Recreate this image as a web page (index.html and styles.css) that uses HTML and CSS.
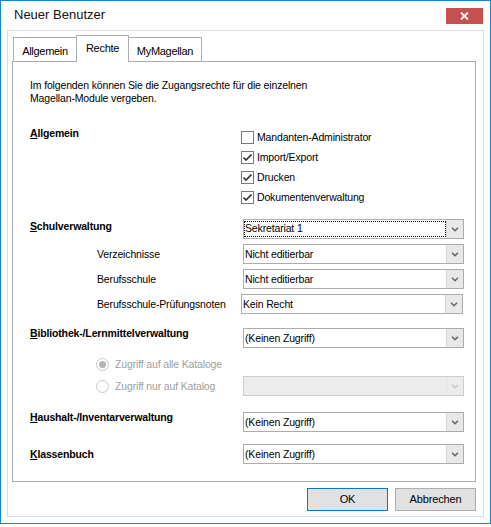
FILE: index.html
```html
<!DOCTYPE html>
<html lang="de">
<head>
  <meta charset="UTF-8" />
  <meta name="viewport" content="width=device-width, initial-scale=1.0"/>
  <title>Neuer Benutzer</title>
  <link rel="stylesheet" href="styles.css">
</head>
<body>

  <div class="window">
    <div class="title-bar">
      <span class="title">Neuer Benutzer</span>
      <div class="close-btn">
        <svg width="9" height="8" viewBox="0 0 9 8"><path d="M1 0.5 L8 7.5 M8 0.5 L1 7.5" stroke="#fff" stroke-width="1.8"/></svg>
      </div>
    </div>

    <div class="client">
      <div class="tabs">
        <div class="tab tab-allgemein">Allgemein</div>
        <div class="tab tab-rechte active">Rechte</div>
        <div class="tab tab-magellan">MyMagellan</div>
      </div>

      <div class="tab-panel">
        <p class="intro">Im folgenden können Sie die Zugangsrechte für die einzelnen<br>Magellan-Module vergeben.</p>

        <!-- Allgemein -->
        <div class="section section-allgemein">
          <div class="section-label"><u>A</u>llgemein</div>
          <div class="check-list">
            <div class="check-row"><span class="checkbox"></span>Mandanten-Administrator</div>
            <div class="check-row"><span class="checkbox checked"><svg width="11" height="11" viewBox="0 0 11 11"><path d="M1.5 5.5 L4 8 L9.5 2.5" fill="none" stroke="#333" stroke-width="1.7"/></svg></span>Import/Export</div>
            <div class="check-row"><span class="checkbox checked"><svg width="11" height="11" viewBox="0 0 11 11"><path d="M1.5 5.5 L4 8 L9.5 2.5" fill="none" stroke="#333" stroke-width="1.7"/></svg></span>Drucken</div>
            <div class="check-row"><span class="checkbox checked"><svg width="11" height="11" viewBox="0 0 11 11"><path d="M1.5 5.5 L4 8 L9.5 2.5" fill="none" stroke="#333" stroke-width="1.7"/></svg></span>Dokumentenverwaltung</div>
          </div>
        </div>

        <!-- Schulverwaltung -->
        <div class="row row-schul">
          <div class="row-label bold label-high"><u>S</u>chulverwaltung</div>
          <div class="combo">
            <div class="combo-value focused">Sekretariat 1</div>
            <div class="combo-arrow"><svg width="8" height="5" viewBox="0 0 8 5"><path d="M1 0.8 L4 3.8 L7 0.8" fill="none" stroke="#666" stroke-width="1.5"/></svg></div>
          </div>
        </div>
        <div class="row sub">
          <div class="row-label">Verzeichnisse</div>
          <div class="combo">
            <div class="combo-value">Nicht editierbar</div>
            <div class="combo-arrow"><svg width="8" height="5" viewBox="0 0 8 5"><path d="M1 0.8 L4 3.8 L7 0.8" fill="none" stroke="#666" stroke-width="1.5"/></svg></div>
          </div>
        </div>
        <div class="row sub">
          <div class="row-label">Berufsschule</div>
          <div class="combo">
            <div class="combo-value">Nicht editierbar</div>
            <div class="combo-arrow"><svg width="8" height="5" viewBox="0 0 8 5"><path d="M1 0.8 L4 3.8 L7 0.8" fill="none" stroke="#666" stroke-width="1.5"/></svg></div>
          </div>
        </div>
        <div class="row sub">
          <div class="row-label">Berufsschule-Prüfungsnoten</div>
          <div class="combo combo-wide">
            <div class="combo-value">Kein Recht</div>
            <div class="combo-arrow"><svg width="8" height="5" viewBox="0 0 8 5"><path d="M1 0.8 L4 3.8 L7 0.8" fill="none" stroke="#666" stroke-width="1.5"/></svg></div>
          </div>
        </div>

        <!-- Bibliothek -->
        <div class="row row-biblio">
          <div class="row-label bold label-top"><u>B</u>ibliothek-/Lernmittelverwaltung</div>
          <div class="combo">
            <div class="combo-value">(Keinen Zugriff)</div>
            <div class="combo-arrow"><svg width="8" height="5" viewBox="0 0 8 5"><path d="M1 0.8 L4 3.8 L7 0.8" fill="none" stroke="#666" stroke-width="1.5"/></svg></div>
          </div>
        </div>
        <div class="row radio-row radio-first">
          <div class="radio-label"><span class="radio checked"></span>Zugriff auf alle Kataloge</div>
        </div>
        <div class="row radio-row">
          <div class="radio-label"><span class="radio"></span>Zugriff nur auf Katalog</div>
          <div class="combo disabled">
            <div class="combo-value"></div>
            <div class="combo-arrow"><svg width="8" height="5" viewBox="0 0 8 5"><path d="M1 0.8 L4 3.8 L7 0.8" fill="none" stroke="#c8c8c8" stroke-width="1.5"/></svg></div>
          </div>
        </div>

        <!-- Haushalt -->
        <div class="row row-haushalt">
          <div class="row-label bold label-top"><u>H</u>aushalt-/Inventarverwaltung</div>
          <div class="combo">
            <div class="combo-value">(Keinen Zugriff)</div>
            <div class="combo-arrow"><svg width="8" height="5" viewBox="0 0 8 5"><path d="M1 0.8 L4 3.8 L7 0.8" fill="none" stroke="#666" stroke-width="1.5"/></svg></div>
          </div>
        </div>

        <!-- Klassenbuch -->
        <div class="row row-klassen">
          <div class="row-label bold"><u>K</u>lassenbuch</div>
          <div class="combo">
            <div class="combo-value">(Keinen Zugriff)</div>
            <div class="combo-arrow"><svg width="8" height="5" viewBox="0 0 8 5"><path d="M1 0.8 L4 3.8 L7 0.8" fill="none" stroke="#666" stroke-width="1.5"/></svg></div>
          </div>
        </div>
      </div>

      <div class="buttons">
        <div class="btn btn-default">OK</div>
        <div class="btn">Abbrechen</div>
      </div>
    </div>
  </div>

</body>
</html>
```

FILE: styles.css
```css
* {
  box-sizing: border-box;
  margin: 0;
  padding: 0;
}

body {
  font-family: "Liberation Sans", Arial, sans-serif;
  font-size: 10.5px;
  letter-spacing: -0.15px;
  color: #000;
  background: #fff;
}

.window {
  width: 491px;
  height: 524px;
  border: 1px solid #1883d7;
  background: #fff;
  display: flex;
  flex-direction: column;
}

/* Titelleiste */
.title-bar {
  height: 29px;
  display: flex;
  justify-content: space-between;
  align-items: flex-start;
  padding: 0 7px 0 13px;
}

.title {
  font-size: 13px;
  letter-spacing: 0;
  line-height: 16px;
  margin-top: 6px;
  color: #111;
}

.close-btn {
  width: 37px;
  height: 16px;
  margin-top: 7px;
  background: #c75050;
  display: flex;
  align-items: center;
  justify-content: center;
}

.client {
  height: 487px;
  margin: 0 6px 6px 6px;
  border: 1px solid #dadada;
  padding: 4px 7px 4px 4px;
  display: flex;
  flex-direction: column;
}

/* Reiter */
.tabs {
  display: flex;
  align-items: flex-end;
  height: 26px;
  padding-left: 1px;
}

.tab {
  height: 24px;
  border: 1px solid #acacac;
  border-bottom: none;
  background: #fff;
  font-size: 11px;
  letter-spacing: -0.3px;
  line-height: 14px;
  padding-top: 6px;
  text-align: center;
}

.tab + .tab {
  margin-left: -1px;
}

.tab-allgemein { width: 64px; }
.tab-rechte { width: 53px; }
.tab-magellan { width: 74px; }

.tab.active {
  height: 27px;
  margin-bottom: -1px;
  padding-top: 5px;
  position: relative;
  z-index: 1;
}

.tab-panel {
  height: 421px;
  border: 1px solid #acacac;
  padding: 17px 0 0 17px;
}

.intro {
  line-height: 13px;
}

.section {
  display: flex;
  margin-top: 22px;
}

.section-label {
  width: 211px;
  font-weight: bold;
  line-height: 13px;
}

.check-list {
  margin-top: 4px;
  display: flex;
  flex-direction: column;
  gap: 7px;
}

.check-row {
  display: flex;
  align-items: center;
  height: 13px;
  line-height: 13px;
  gap: 3px;
}

.checkbox {
  width: 13px;
  height: 13px;
  border: 1px solid #7a7a7a;
  background: #fff;
  display: flex;
  align-items: center;
  justify-content: center;
}

/* Zeilen mit Auswahlfeldern */
.row {
  display: flex;
  align-items: center;
  height: 20px;
  margin-top: 5px;
}

.row-schul { margin-top: 15px; }
.row-biblio { margin-top: 14px; }
.radio-first { margin-top: 6px; }
.radio-first + .radio-row { margin-top: 2px; }
.row-haushalt { margin-top: 16px; }
.row-klassen { margin-top: 12px; }

.row-label {
  width: 213px;
  line-height: 13px;
}

.row-label.bold {
  font-weight: bold;
}

.label-high {
  align-self: flex-start;
  padding-top: 1px;
}

.label-top {
  align-self: flex-start;
  margin-top: -1px;
}

.sub .row-label {
  margin-left: 67px;
  width: 146px;
}

.combo {
  width: 221px;
  height: 20px;
  border: 1px solid #acacac;
  background: #fff;
  display: flex;
}

.combo-wide {
  width: 222px;
  margin-left: -2px;
}

.combo-value {
  flex: 1;
  line-height: 16px;
  padding: 1px 1px;
  white-space: nowrap;
}

.combo-value.focused {
  outline: 1px dotted #000;
  outline-offset: -1px;
  margin: 1px 0 1px 0;
  line-height: 14px;
  padding: 0 1px;
}

.combo-arrow {
  width: 17px;
  background: #e8e8e8;
  border-left: 1px solid #d6d6d6;
  display: flex;
  align-items: center;
  justify-content: center;
}

.combo.disabled {
  border-color: #cccccc;
  background: #ececec;
}

.combo.disabled .combo-arrow {
  background: #ececec;
  border-left-color: #e2e2e2;
}

.radio-row {
  margin-left: 66px;
  color: #a0a0a0;
}

.radio-label {
  width: 147px;
  display: flex;
  align-items: center;
  gap: 6px;
  line-height: 13px;
}

.radio {
  width: 13px;
  height: 13px;
  border: 1px solid #c8c8c8;
  border-radius: 50%;
  background: #fff;
  display: flex;
  align-items: center;
  justify-content: center;
}

.radio.checked::after {
  content: "";
  width: 7px;
  height: 7px;
  border-radius: 50%;
  background: #b4b4b4;
}

/* Schaltflächen */
.buttons {
  display: flex;
  justify-content: flex-end;
  gap: 7px;
  margin-top: 6px;
}

.btn {
  width: 81px;
  height: 23px;
  border: 1px solid #adadad;
  background: #e1e1e1;
  text-align: center;
  line-height: 21px;
  font-size: 11px;
}

.btn-default {
  border-color: #0078d7;
}
```
